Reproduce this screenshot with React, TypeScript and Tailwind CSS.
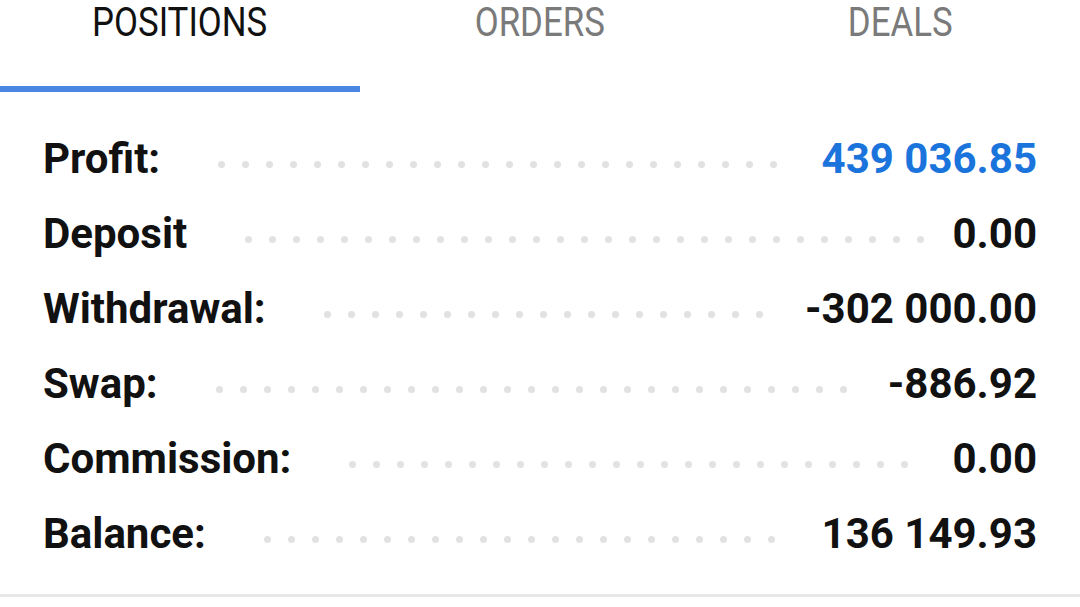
import React from "react";

type Row = { label: string; value: string; accent?: boolean };

const rows: Row[] = [
  { label: "Profit:", value: "439 036.85", accent: true },
  { label: "Deposit", value: "0.00" },
  { label: "Withdrawal:", value: "-302 000.00" },
  { label: "Swap:", value: "-886.92" },
  { label: "Commission:", value: "0.00" },
  { label: "Balance:", value: "136 149.93" },
];

const tabs = ["POSITIONS", "ORDERS", "DEALS"];

function Leader() {
  // dotted leader: dots that don't fit wrap onto a hidden second line
  return (
    <div className="flex-1 ml-[58px] mr-[28px] mt-[40px] h-[7px] overflow-hidden flex flex-wrap gap-x-[17px] gap-y-[20px]">
      {Array.from({ length: 60 }).map((_, i) => (
        <span key={i} className="block w-[7px] h-[7px] rounded-full bg-[#e2e2e2]" />
      ))}
    </div>
  );
}

export default function App() {
  return (
    <div
      className="w-[1080px] h-[607px] bg-white overflow-hidden"
      style={{ fontFamily: "Roboto, 'Noto Sans', sans-serif" }}
    >
      {/* tab strip */}
      <div className="grid grid-cols-3 h-[92px]">
        {tabs.map((t, i) => (
          <div key={t} className="flex flex-col">
            <div className="h-[86px] flex justify-center pt-[3px]">
              <span
                className={`inline-block text-[40px] leading-[40px] font-normal scale-x-[0.87] ${
                  i === 0 ? "text-[#111111]" : "text-[#7a7a7a]"
                }`}
              >
                {t}
              </span>
            </div>
            <div className={`h-[6px] ${i === 0 ? "bg-[#4a86e2]" : "bg-transparent"}`} />
          </div>
        ))}
      </div>

      {/* account summary */}
      <div className="pt-[29px] pl-[43px] pr-[43px]">
        {rows.map((r) => (
          <div key={r.label} className="flex items-start h-[75px]">
            <span className="text-[42px] leading-[75px] font-bold text-[#111111] whitespace-nowrap">
              {r.label}
            </span>
            <Leader />
            <span
              className={`text-[42px] leading-[75px] font-bold whitespace-nowrap ${
                r.accent ? "text-[#1b74dc]" : "text-[#111111]"
              }`}
            >
              {r.value}
            </span>
          </div>
        ))}
      </div>

      <div className="mt-[23px] h-[3px] bg-[#e8e8e8]" />
    </div>
  );
}
